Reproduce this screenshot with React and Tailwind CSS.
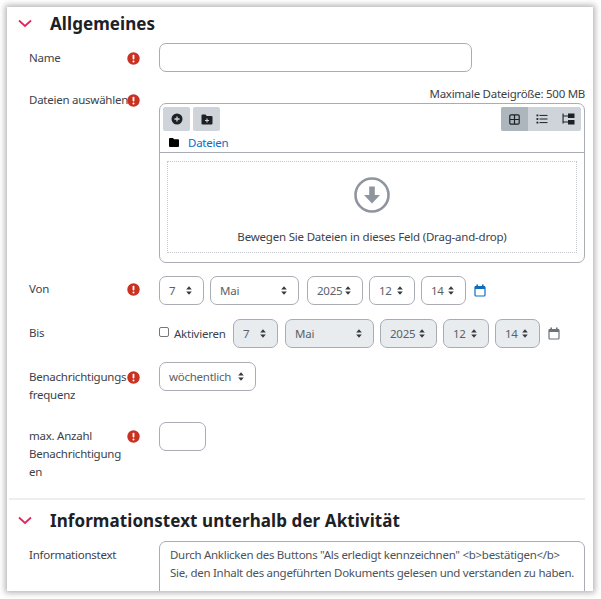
const font = { fontFamily: '"Noto Sans", "Open Sans", sans-serif' };

const Chevron = () => (
  <svg width="14" height="9" viewBox="0 0 14 9" className="shrink-0" fill="none" stroke="#e0245e" strokeWidth="1.7">
    <path d="M1 1.5l6 5.5 6-5.5" />
  </svg>
);

const Required = () => (
  <svg width="13" height="13" viewBox="0 0 13 13" className="shrink-0">
    <circle cx="6.5" cy="6.5" r="6.2" fill="#ca3120" />
    <rect x="5.6" y="2.8" width="1.8" height="4.8" rx="0.8" fill="#fff" />
    <circle cx="6.5" cy="9.5" r="1" fill="#fff" />
  </svg>
);

const Caret = () => (
  <svg width="6" height="9" viewBox="0 0 6 9" className="shrink-0" fill="#343a40">
    <path d="M3 0.3L5.8 3.6H0.2zM3 8.7L0.2 5.4h5.6z" />
  </svg>
);

const Calendar = ({ color }) => (
  <svg width="12" height="13" viewBox="0 0 12 13" className="shrink-0" fill="none">
    <rect x="1" y="2.5" width="10" height="9.5" rx="1" stroke={color} strokeWidth="1.2" />
    <rect x="1" y="2" width="10" height="3" fill={color} />
    <rect x="2.4" y="0.5" width="1.6" height="2" fill={color} />
    <rect x="8" y="0.5" width="1.6" height="2" fill={color} />
  </svg>
);

const Select = ({ value, width, disabled }) => (
  <div
    style={{ width }}
    className={`h-[29px] shrink-0 flex items-center justify-between pl-[9px] pr-[11px] rounded-[7px] border text-[11.5px] tracking-[-0.25px] text-[#5b6168] ${
      disabled ? 'bg-[#e9ecef] border-[#a9adb3]' : 'bg-white border-[#a9adb3]'
    }`}
  >
    <span>{value}</span>
    <Caret />
  </div>
);

const Row = ({ label, required, top, className = '', children }) => (
  <div className={`flex ${className}`}>
    <div style={{ paddingTop: top }} className="w-[98px] shrink-0 whitespace-nowrap text-[11.5px] tracking-[-0.25px] leading-[18px] text-[#3d4248]">{label}</div>
    <div style={{ paddingTop: top }} className="w-[32px] shrink-0">
      {required && <div className="h-[18px] flex items-center"><Required /></div>}
    </div>
    <div className="w-[426px] shrink-0">{children}</div>
  </div>
);

const ToolButton = ({ children }) => (
  <div className="w-[27px] h-[24px] bg-[#ced4da] rounded-[2px] flex items-center justify-center">{children}</div>
);

export default function App() {
  return (
    <div className="w-[601px] h-[599px] bg-white overflow-hidden p-[7px]" style={font}>
      <div className="w-[586px] h-[584px] bg-white overflow-hidden shadow-[0_0_6px_2px_rgba(0,0,0,0.3)] pl-[2px]">
        <div className="flex items-center h-[23px] mt-[5px] pl-[9px] text-[#1d2125]">
          <Chevron />
          <h2 className="ml-[18px] text-[17px] tracking-[0.08px] font-bold leading-[23px]">Allgemeines</h2>
        </div>

        <div className="pl-[20px]">
          <Row label="Name" required top={6} className="mt-[8px]">
            <div className="w-[313px] h-[29px] rounded-[7px] border border-[#a9adb3] bg-white" />
          </Row>

          <Row label="Dateien auswählen" required top={6} className="mt-[13px]">
            <div className="text-right text-[11.5px] tracking-[-0.28px] leading-[13px] pt-[2px] text-[#3d4248]">Maximale Dateigröße: 500 MB</div>
            <div className="mt-[3px] h-[160px] rounded-[7px] border border-[#a9adb3] overflow-hidden">
              <div className="h-[49px] border-b border-[#a9adb3] px-[3px] pt-[3px]">
                <div className="flex justify-between">
                  <div className="flex gap-[3px]">
                    <ToolButton>
                      <svg width="12" height="12" viewBox="0 0 12 12">
                        <circle cx="6" cy="6" r="5.5" fill="#1d2125" />
                        <path d="M6 3.4v5.2M3.4 6h5.2" stroke="#ced4da" strokeWidth="1.3" />
                      </svg>
                    </ToolButton>
                    <ToolButton>
                      <svg width="12" height="11" viewBox="0 0 12 11">
                        <path d="M0.5 1.5a1 1 0 0 1 1-1h3l1.2 1.4h4.8a1 1 0 0 1 1 1v6.6a1 1 0 0 1-1 1h-9a1 1 0 0 1-1-1z" fill="#1d2125" />
                        <path d="M6 4.5v4M4 6.5h4" stroke="#ced4da" strokeWidth="1.1" />
                      </svg>
                    </ToolButton>
                  </div>
                  <div className="flex w-[80px] h-[24px] rounded-[2px] overflow-hidden bg-[#ced4da]">
                    <div className="w-[27px] bg-[#adb5bd] flex items-center justify-center">
                      <svg width="11" height="11" viewBox="0 0 11 11" fill="none" stroke="#1d2125" strokeWidth="1.2">
                        <rect x="0.8" y="0.8" width="9.4" height="9.4" rx="1.2" />
                        <path d="M5.5 1v9M1 5.5h9" />
                      </svg>
                    </div>
                    <div className="w-[27px] flex items-center justify-center">
                      <svg width="12" height="10" viewBox="0 0 12 10" fill="#1d2125">
                        <rect x="0.5" y="0.5" width="1.8" height="1.8" />
                        <rect x="0.5" y="4.1" width="1.8" height="1.8" />
                        <rect x="0.5" y="7.7" width="1.8" height="1.8" />
                        <rect x="3.5" y="0.9" width="8" height="1" />
                        <rect x="3.5" y="4.5" width="8" height="1" />
                        <rect x="3.5" y="8.1" width="8" height="1" />
                      </svg>
                    </div>
                    <div className="w-[26px] flex items-center justify-center">
                      <svg width="13" height="12" viewBox="0 0 13 12" fill="#1d2125">
                        <path d="M0.5 0.5h1.1v10h-1.1zM1 2.5h5v1H1zM1 8.5h5v1H1z" />
                        <rect x="6" y="0.5" width="6.5" height="4.5" />
                        <rect x="6" y="7" width="6.5" height="4.5" />
                      </svg>
                    </div>
                  </div>
                </div>
                <div className="flex items-center mt-[4px] pl-[6px] h-[16px]">
                  <svg width="10" height="9" viewBox="0 0 10 9" fill="#000" className="-mt-[2px]">
                    <path d="M0 1a1 1 0 0 1 1-1h3l1 1.2h4a1 1 0 0 1 1 1V8a1 1 0 0 1-1 1H1a1 1 0 0 1-1-1z" />
                  </svg>
                  <span className="ml-[9px] text-[11.5px] tracking-[-0.25px] text-[#0f6cbf]">Dateien</span>
                </div>
              </div>
              <div className="mx-[7px] mt-[8px] h-[92px] border border-dotted border-[#c4c8cd] flex flex-col items-center">
                <svg width="36" height="36" viewBox="0 0 36 36" className="mt-[15px]">
                  <circle cx="18" cy="18" r="16.5" fill="none" stroke="#8f959e" strokeWidth="2.6" />
                  <path d="M15.2 9.5h5.6v8.5h5.2L18 26.5 10 18h5.2z" fill="#8f959e" />
                </svg>
                <div className="mt-[16px] text-[11.5px] tracking-[-0.2px] leading-[16px] text-[#3d4248]">Bewegen Sie Dateien in dieses Feld (Drag-and-drop)</div>
              </div>
            </div>
          </Row>

          <Row label="Von" required top={4} className="mt-[13px]">
            <div className="flex items-center gap-[6px]">
              <Select value="7" width={45} />
              <Select value="Mai" width={89} />
              <div className="ml-[2px]"><Select value="2025" width={56} /></div>
              <Select value="12" width={46} />
              <Select value="14" width={45} />
              <div className="ml-[2px]"><Calendar color="#0f6cbf" /></div>
            </div>
          </Row>

          <Row label="Bis" top={5} className="mt-[14px]">
            <div className="flex items-center gap-[6px]">
              <div className="flex items-center w-[68px] shrink-0 text-[11.5px] tracking-[-0.25px] text-[#3d4248]">
                <span className="w-[10px] h-[10px] -mt-[3px] shrink-0 rounded-[2px] border border-[#767676] bg-white" />
                <span className="ml-[5px]">Aktivieren</span>
              </div>
              <Select value="7" width={45} disabled />
              <div className="ml-[1px]"><Select value="Mai" width={89} disabled /></div>
              <Select value="2025" width={57} disabled />
              <Select value="12" width={46} disabled />
              <Select value="14" width={45} disabled />
              <div className="ml-[2px]"><Calendar color="#6a737b" /></div>
            </div>
          </Row>

          <Row label={<>Benachrichtigungs<br />frequenz</>} required top={6} className="mt-[14px]">
            <Select value="wöchentlich" width={97} />
          </Row>

          <Row label={<>max. Anzahl<br />Benachrichtigung<br />en</>} required top={5} className="mt-[18px]">
            <div className="w-[47px] h-[29px] rounded-[7px] border border-[#a9adb3] bg-white" />
          </Row>
        </div>

        <hr className="mt-[17px] mr-[8px] border-t-2 border-[#eeeeee]" />

        <div className="flex items-center h-[23px] mt-[9px] pl-[9px] text-[#1d2125]">
          <Chevron />
          <h2 className="ml-[18px] text-[17px] tracking-[0.08px] font-bold leading-[23px]">Informationstext unterhalb der Aktivität</h2>
        </div>

        <div className="pl-[20px]">
          <Row label="Informationstext" top={5} className="mt-[9px]">
            <div className="h-[80px] rounded-[7px] border border-[#a9adb3] pl-[10px] pt-[4px] text-[11.5px] tracking-[-0.28px] leading-[18px] text-[#4d5359] whitespace-nowrap">
              Durch Anklicken des Buttons "Als erledigt kennzeichnen" &lt;b&gt;bestätigen&lt;/b&gt;
              <br />
              Sie, den Inhalt des angeführten Dokuments gelesen und verstanden zu haben.
            </div>
          </Row>
        </div>
      </div>
    </div>
  );
}
